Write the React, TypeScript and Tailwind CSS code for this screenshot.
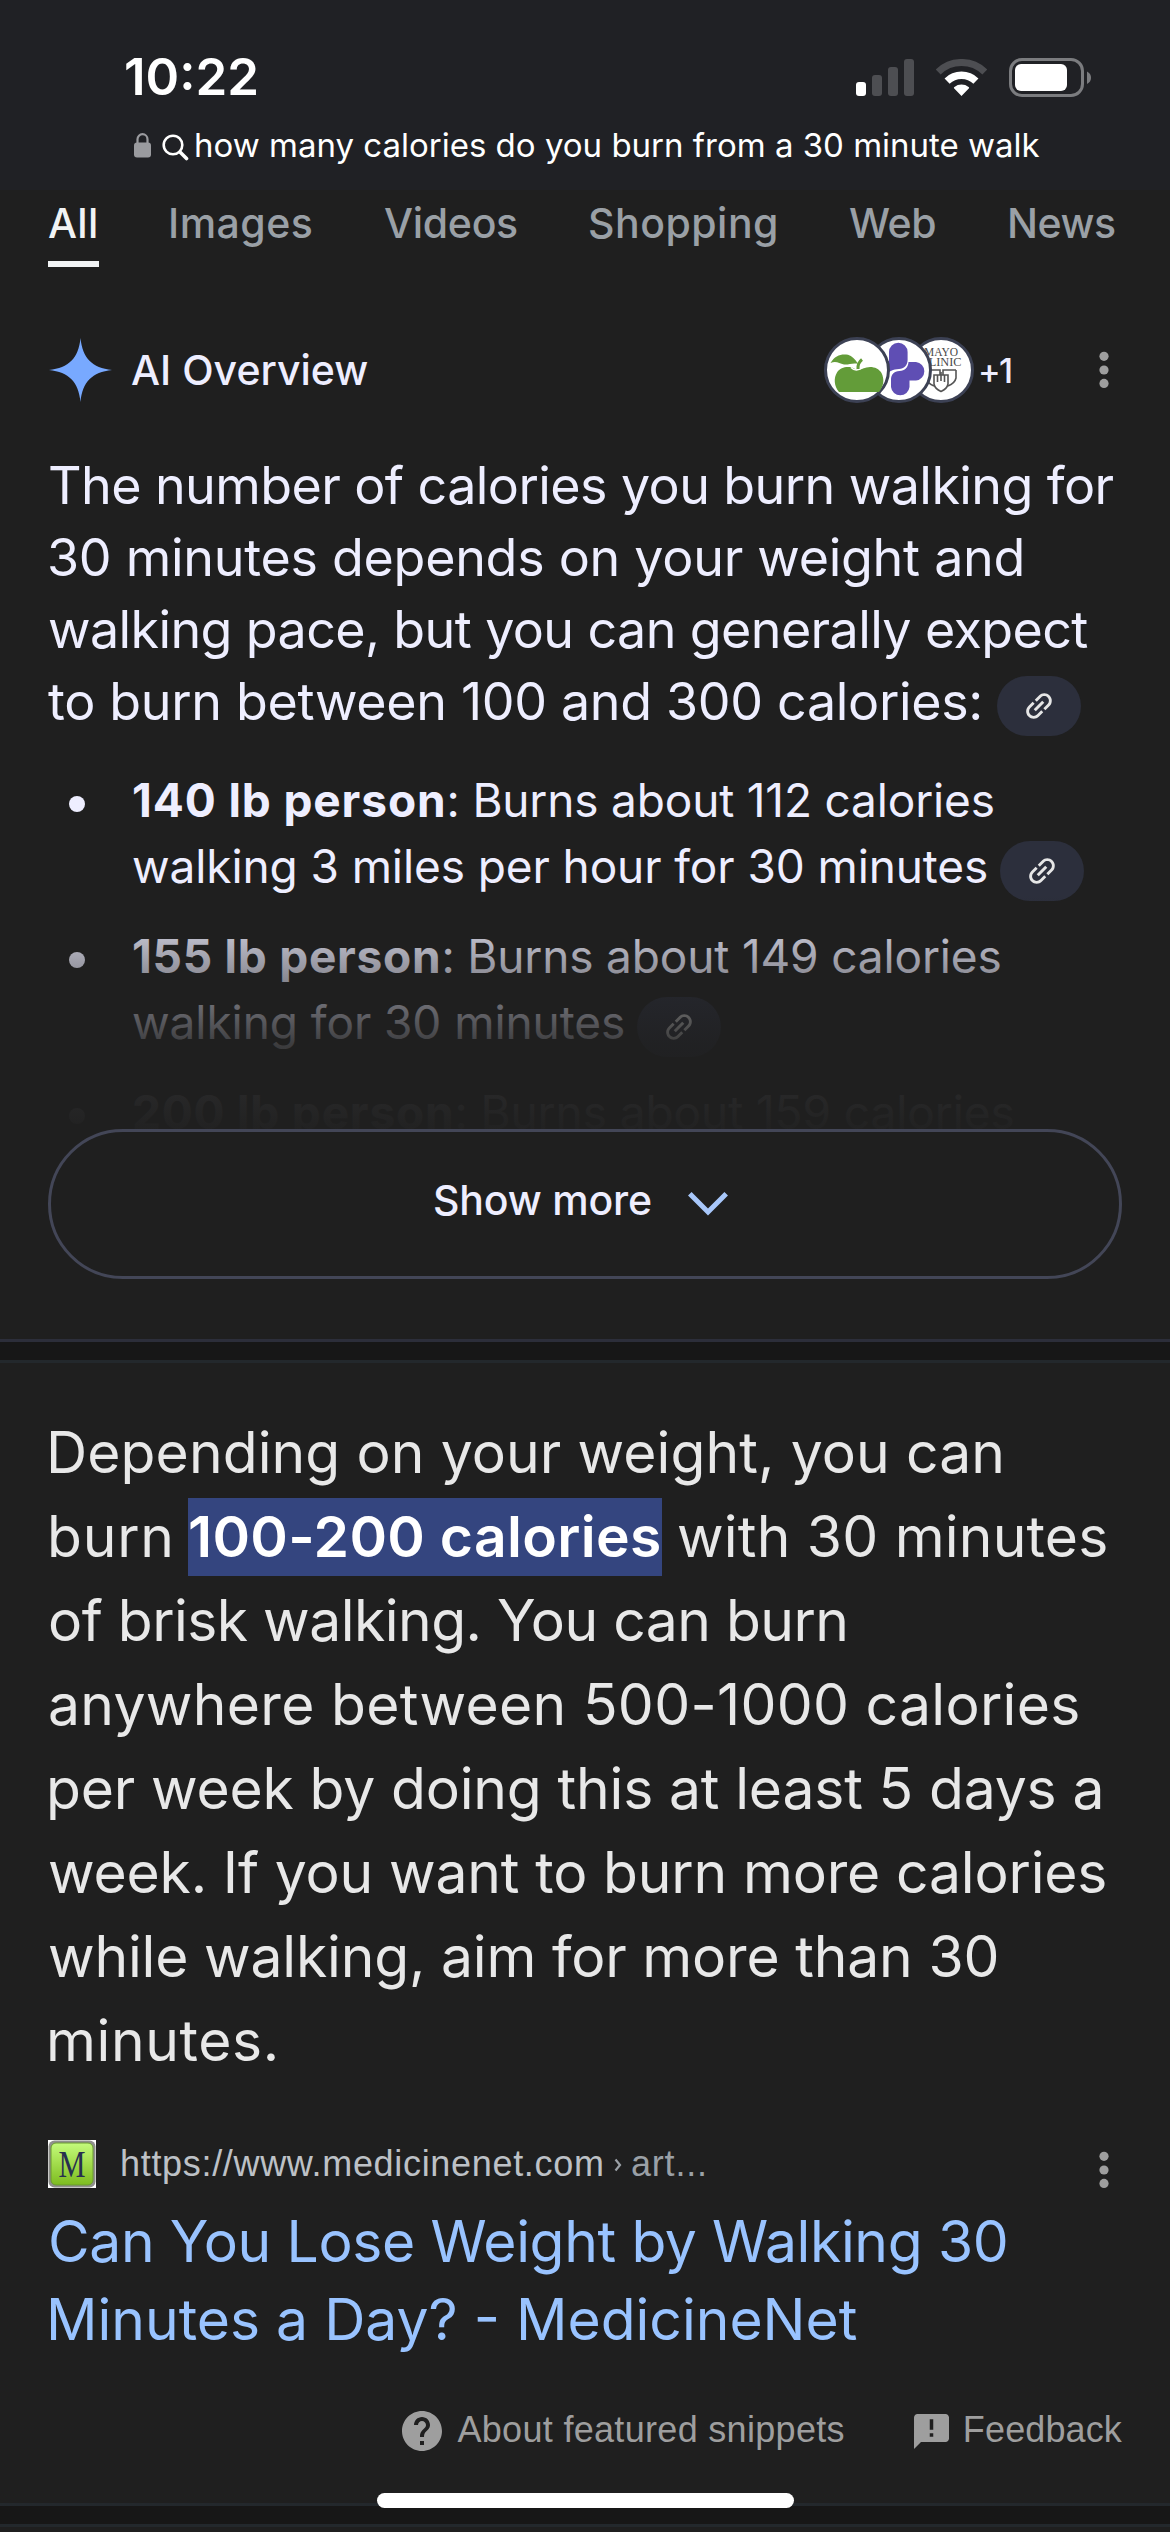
import clsx from "clsx"

const tabs = [
  { label: "All", width: "w-[120px]", tracking: "tracking-[0.3px]", active: true },
  { label: "Images", width: "w-[216px]", tracking: "tracking-[0.5px]" },
  { label: "Videos", width: "w-[204px]", tracking: "tracking-[-0.3px]" },
  { label: "Shopping", width: "w-[261px]", tracking: "tracking-[0.5px]" },
  { label: "Web", width: "w-[158px]", tracking: "tracking-[-0.5px]" },
  { label: "News", width: "w-[115px]", tracking: "tracking-[-0.5px]" },
]

const StatusBar = () => {
  return (
    <div className="flex h-[54px] items-center pl-[124px] pr-[78px]">
      <span className="text-[51px] font-semibold leading-[54px] text-white">10:22</span>
      <div className="ml-auto flex items-center gap-[22px]">
        <svg width="58" height="37" viewBox="0 0 58 37">
          <rect x="0" y="23" width="10" height="14" rx="3" fill="#fff" />
          <rect x="16" y="16" width="10" height="21" rx="3" fill="#4d4e52" />
          <rect x="32" y="8" width="10" height="29" rx="3" fill="#4d4e52" />
          <rect x="48" y="0" width="10" height="37" rx="3" fill="#4d4e52" />
        </svg>
        <svg width="51" height="37" viewBox="0 0 51 37" fill="none">
          <path d="M2.2 12.9A33.5 33.5 0 0 1 48.8 12.9" stroke="#4d4e52" strokeWidth="7" />
          <path d="M11.1 22.1A20.7 20.7 0 0 1 39.9 22.1" stroke="#fff" strokeWidth="7.3" />
          <path d="M25.5 37 18 29.2Q17.6 28.4 18.4 27.9A11.7 11.7 0 0 1 32.6 27.9Q33.4 28.4 33 29.2Z" fill="#fff" />
        </svg>
        <svg width="83" height="39" viewBox="0 0 83 39">
          <rect x="1.5" y="1.5" width="72" height="36" rx="11.5" fill="none" stroke="#7b7c7f" strokeWidth="3" />
          <rect x="6" y="6" width="52" height="27" rx="6" fill="#fff" />
          <path d="M78 13.5Q82 15.5 82 19.7T78 26Z" fill="#7b7c7f" />
        </svg>
      </div>
    </div>
  )
}

const AddressLine = () => {
  return (
    <div className="mt-5 flex h-[42px] items-center pl-[134px]">
      <svg width="17" height="26" viewBox="0 0 17 26">
        <rect x="0" y="10.5" width="17" height="15" rx="3" fill="#9a9b9f" />
        <path d="M3.5 12V7.2a5 5 0 0 1 10 0V12" fill="none" stroke="#9a9b9f" strokeWidth="2.2" />
      </svg>
      <svg className="ml-[11px] mt-1" width="27" height="27" viewBox="0 0 27 27" fill="none" stroke="#fff">
        <circle cx="11" cy="11" r="9.3" strokeWidth="2.6" />
        <path d="M18 18l6.5 6.5" strokeWidth="3.6" strokeLinecap="round" />
      </svg>
      <span className="ml-[5px] whitespace-nowrap text-[33px] leading-[42px] text-white">
        how many calories do you burn from a 30 minute walk
      </span>
    </div>
  )
}

const Tabs = () => {
  return (
    <nav className="flex pl-12">
      {tabs.map((tab) => (
        <div key={tab.label} className={clsx("shrink-0", tab.width)}>
          <div className="flex h-[77px] w-fit flex-col justify-between">
            <span
              className={clsx(
                "whitespace-nowrap text-[41px] font-medium leading-[66px]",
                tab.tracking,
                tab.active ? "text-[#f1f3f4]" : "text-[#9aa0a6]"
              )}
            >
              {tab.label}
            </span>
            {tab.active && <span className="h-1.5 bg-[#f1f3f4]" />}
          </div>
        </div>
      ))}
    </nav>
  )
}

const Kebab = ({ className }: { className?: string }) => {
  return (
    <svg className={clsx("shrink-0", className)} width="12" height="38" viewBox="0 0 12 38" fill="#9e9e9e">
      <circle cx="6" cy="5.3" r="4.6" />
      <circle cx="6" cy="19" r="4.6" />
      <circle cx="6" cy="32.4" r="4.6" />
    </svg>
  )
}

const SourceIcons = () => {
  return (
    <div className="flex">
      <svg className="z-20" width="66" height="66" viewBox="0 0 66 66">
        <circle cx="33" cy="33" r="31.5" fill="#fff" stroke="#3c4154" strokeWidth="3" />
        <g fill="#639c39">
          <path d="M15 55C10 49 9.500 41 13 35.500 17 29.500 25 29 30 31.500 33 33.500 36 33 39 31.500 46 28.500 54 30 57.500 36 60.500 42 60 49 55 55Z" />
          <path d="M6.500 26C11 18 18 16.500 24 17.800 28 19 31 22 34 26.800 28 25.500 25 28 20 27.500 15 27 13 23.500 6.500 26Z" />
        </g>
        <path d="M27 30.500Q32 35.500 38.500 30.500" fill="none" stroke="#fff" strokeWidth="1.500" />
        <path d="M34 32Q33.500 26 38 22.500" fill="none" stroke="#639c39" strokeWidth="3" />
      </svg>
      <svg className="z-10 -ml-6" width="66" height="66" viewBox="0 0 66 66">
        <circle cx="33" cy="33" r="31.5" fill="#fff" stroke="#3c4154" strokeWidth="3" />
        <g fill="#5f4eb4">
          <path d="M23 15a9.300 9.300 0 0 1 18.600 0V23C41.500 29 38 31.500 33 32 27 32.500 23 34 20 38 14 38 8 36 8 31 8 26 15 24 23 24Z" />
          <path d="M42.500 25H50a9.300 9.300 0 0 1 0 18.500H43.500V50a9.300 9.300 0 0 1-18.500 0V43C25 37 28 34.500 33.500 34 39 33.500 42 31 42.500 25Z" />
        </g>
      </svg>
      <svg className="-ml-6" width="66" height="66" viewBox="0 0 66 66">
        <circle cx="33" cy="33" r="31.5" fill="#fff" stroke="#3c4154" strokeWidth="3" />
        <g className="font-['Liberation_Serif',serif]" fill="#4a4a4a" fontSize="12" textAnchor="middle">
          <text x="33" y="18.500" textLength="34" lengthAdjust="spacingAndGlyphs">MAYO</text>
          <text x="33" y="29" textLength="41" lengthAdjust="spacingAndGlyphs">CLINIC</text>
        </g>
        <g fill="none" stroke="#555" strokeWidth="1.600">
          <path d="M18 33H32V38M18 33V41Q19 46 26 49" />
          <path d="M48 33H35V38M48 33V41Q47 46 40 49" />
          <path d="M26 38H40V47Q39 52 33 54.500 27 52 26 47Z" />
          <path d="M29.500 38V45M33 35V44M36.500 38V45" />
        </g>
      </svg>
    </div>
  )
}

const LinkPill = ({ className }: { className?: string }) => {
  return (
    <span
      className={clsx("flex h-[60px] w-[84px] shrink-0 items-center justify-center rounded-full bg-[#2c2f3c]", className)}
    >
      <svg className="-rotate-45" width="36" height="36" viewBox="0 0 24 24" fill="#e6e6e6">
        <path d="M3.9 12c0-1.71 1.39-3.1 3.1-3.1h4V7H7c-2.76 0-5 2.24-5 5s2.24 5 5 5h4v-1.9H7c-1.71 0-3.1-1.39-3.1-3.1zM8 13h8v-2H8v2zm9-6h-4v1.9h4c1.71 0 3.1 1.39 3.1 3.1s-1.39 3.1-3.1 3.1h-4V17h4c2.76 0 5-2.24 5-5s-2.24-5-5-5z" />
      </svg>
    </span>
  )
}

const Divider = ({ className }: { className: string }) => {
  return <div className={clsx("h-6 border-y-[3px] border-b-[#23282c] bg-[#171717]", className)} />
}

const Bullet = () => <span className="ml-[21px] mr-[47px] mt-[29px] size-4 shrink-0 rounded-full bg-[#eeeeff]" />

const AiOverview = () => {
  return (
    <section className="mt-[68px] px-12 text-[#eeeeff]">
      <div className="flex h-[70px] items-center">
        <svg width="64" height="64" viewBox="0 0 64 64">
          <path d="M32.500 0C34.500 20 44 30 64 32 44 34 34.500 44 32.500 64 30.500 44 21 34 1 32 21 30 30.500 20 32.500 0Z" fill="#78a9ff" />
        </svg>
        <h2 className="ml-[19px] whitespace-nowrap text-[41px] font-medium leading-[68px]">AI Overview</h2>
        <div className="ml-auto flex items-center pr-3">
          <SourceIcons />
          <span className="ml-1 w-[120px] text-[34px] font-medium tracking-[-1.7px]">+1</span>
          <Kebab />
        </div>
      </div>

      <div className="mt-[45px] whitespace-nowrap text-[52px] leading-[72px]">
        <p className="tracking-[-0.58px]">The number of calories you burn walking for</p>
        <p className="-ml-px tracking-[-0.28px]">30 minutes depends on your weight and</p>
        <p className="tracking-[-0.61px]">walking pace, but you can generally expect</p>
        <div className="flex h-[72px] items-center">
          <p className="w-[949px] tracking-[-0.33px]">to burn between 100 and 300 calories:</p>
          <LinkPill className="mt-2" />
        </div>
      </div>

      <div className="relative mt-[29px] h-[362px] overflow-hidden">
        <ul className="flex flex-col gap-6 whitespace-nowrap text-[46px] leading-[66px]">
          <li className="flex">
            <Bullet />
            <div>
              <p className="tracking-[-0.17px]"><b className="tracking-[0.89px]">140 lb person</b>: Burns about 112 calories</p>
              <div className="flex h-[66px] items-center">
                <p className="w-[868px] tracking-[-0.1px]">walking 3 miles per hour for 30 minutes</p>
                <LinkPill className="mt-2.5" />
              </div>
            </div>
          </li>
          <li className="flex">
            <Bullet />
            <div>
              <p className="tracking-[-0.15px]"><b className="tracking-[0.75px]">155 lb person</b>: Burns about 149 calories</p>
              <div className="flex h-[66px] items-center">
                <p className="w-[505px] tracking-[-0.07px]">walking for 30 minutes</p>
                <LinkPill className="mt-2.5" />
              </div>
            </div>
          </li>
          <li className="flex">
            <Bullet />
            <p className="tracking-[-0.08px]"><b className="tracking-[0.8px]">200 lb person</b>: Burns about 159 calories</p>
          </li>
        </ul>
        {/* fades the collapsed list into the page */}
        <div className="absolute inset-x-0 bottom-0 h-[234px] bg-[linear-gradient(to_bottom,rgba(31,31,31,0)_0%,rgba(31,31,31,0.86)_64%,rgba(31,31,31,0.95)_80%,rgba(31,31,31,0.99)_100%)]" />
      </div>

      <button className="flex h-[150px] w-full items-center justify-center rounded-full border-[3px] border-[#434657] pr-[9px]">
        <span className="-mt-1.5 text-[41px] font-medium tracking-[-0.18px]">Show more</span>
        <svg className="ml-9" width="40" height="24" viewBox="0 0 40 24" fill="none" stroke="#a8c7fa" strokeWidth="5">
          <path d="M1.800 1.800 20 20 38.200 1.800" />
        </svg>
      </button>
    </section>
  )
}

const FeaturedSnippet = () => {
  return (
    <section className="px-12 pt-12">
      <div className="whitespace-nowrap text-[57px] leading-[84px] text-[#e8e8e8]">
        <p className="-ml-0.5 tracking-[0.1px]">Depending on your weight, you can</p>
        <div className="flex h-[84px] items-center">
          <span className="-ml-px w-[141px] tracking-[0.8px]">burn</span>
          <mark className="h-[78px] w-[474px] bg-[#34457f] font-semibold leading-[78px] tracking-[0.3px] text-white">100-200 calories</mark>
          <span className="ml-[15px] tracking-[0.2px]">with 30 minutes</span>
        </div>
        <p className="tracking-[-0.52px]">of brisk walking. You can burn</p>
        <p className="tracking-[0.31px]">anywhere between 500-1000 calories</p>
        <p className="-ml-0.5 tracking-[-0.16px]">per week by doing this at least 5 days a</p>
        <p className="tracking-[-0.16px]">week. If you want to burn more calories</p>
        <p className="tracking-[-0.19px]">while walking, aim for more than 30</p>
        <p className="-ml-0.5 tracking-[0.6px]">minutes.</p>
      </div>

      <div className="mt-[57px] flex h-12 items-center whitespace-nowrap font-['Liberation_Sans',Arial,sans-serif] text-[36px] text-[#bdc1c6]">
        <svg width="48" height="48" viewBox="0 0 48 48">
          <defs>
            <linearGradient id="favicon" x1="0" y1="0" x2="0" y2="1">
              <stop offset="0" stopColor="#c4fb7c" />
              <stop offset="0.45" stopColor="#a5df50" />
              <stop offset="1" stopColor="#7dbc20" />
            </linearGradient>
          </defs>
          <rect width="48" height="48" fill="#fff" />
          <rect x="0.500" y="0.500" width="47" height="47" rx="6" fill="#8f908c" />
          <rect x="3" y="3" width="42" height="42" rx="5" fill="url(#favicon)" stroke="#6b9a30" strokeWidth="1" />
          <text x="24" y="36.500" className="font-['Liberation_Serif',serif]" fontSize="38" textAnchor="middle" textLength="27" lengthAdjust="spacingAndGlyphs" fill="#27304f">M</text>
        </svg>
        <span className="ml-6 w-[494px] tracking-[0.68px]">https://www.medicinenet.com</span>
        <svg width="8" height="14" viewBox="0 0 8 14" className="mt-0.5" fill="none" stroke="#9aa0a6" strokeWidth="2.2">
          <path d="M1.500 1.500 6 7 1.500 12.500" />
        </svg>
        <span className="ml-[9px] tracking-[0.8px] text-[#9aa0a6]">art...</span>
        <Kebab className="ml-auto mr-3 mt-3" />
      </div>

      <h3 className="mt-[15px] whitespace-nowrap text-[57px] leading-[78px] text-[#99c3ff]">
        <span className="block tracking-[-0.38px]">Can You Lose Weight by Walking 30</span>
        <span className="-ml-0.5 block">Minutes a Day? - MedicineNet</span>
      </h3>

      <div className="mt-[52px] flex h-10 items-center justify-end whitespace-nowrap font-['Liberation_Sans',Arial,sans-serif] text-[36px] text-[#9e9e9e]">
        <svg width="40" height="40" viewBox="2 2 20 20" fill="currentColor">
          <path d="M12 2C6.480 2 2 6.480 2 12s4.480 10 10 10 10-4.480 10-10S17.520 2 12 2zm1 17h-2v-2h2v2zm2.070-7.750l-.9.920C13.450 12.900 13 13.500 13 15h-2v-.5c0-1.100.450-2.100 1.170-2.830l1.240-1.260c.370-.360.590-.860.590-1.410 0-1.100-.9-2-2-2s-2 .9-2 2H8c0-2.210 1.790-4 4-4s4 1.790 4 4c0 .880-.360 1.680-.930 2.250z" />
        </svg>
        <span className="-mt-0.5 ml-[15px] tracking-[0.31px]">About featured snippets</span>
        <svg className="ml-[69px]" width="35" height="35" viewBox="2 2 20 20" fill="currentColor">
          <path d="M20 2H4c-1.100 0-1.990.9-1.990 2L2 22l4-4h14c1.100 0 2-.9 2-2V4c0-1.100-.9-2-2-2zm-7 13h-2v-2h2v2zm0-4h-2V5h2v6z" />
        </svg>
        <span className="-mt-0.5 ml-[14px] tracking-[0.13px]">Feedback</span>
      </div>
    </section>
  )
}

export default function App() {
  return (
    <div className="relative h-[2532px] w-[1170px] overflow-hidden bg-[#1f1f1f] font-['Inter',sans-serif]">
      <header className="h-[190px] bg-[#202125] pt-[50px]">
        <StatusBar />
        <AddressLine />
      </header>
      <Tabs />
      <AiOverview />
      <Divider className="mt-[60px] border-t-[#2c2e3a]" />
      <FeaturedSnippet />
      <Divider className="mt-[52px] border-t-[#23282c]" />
      <div className="absolute bottom-6 left-[377px] h-[15px] w-[417px] rounded-full bg-white" />
    </div>
  )
}
